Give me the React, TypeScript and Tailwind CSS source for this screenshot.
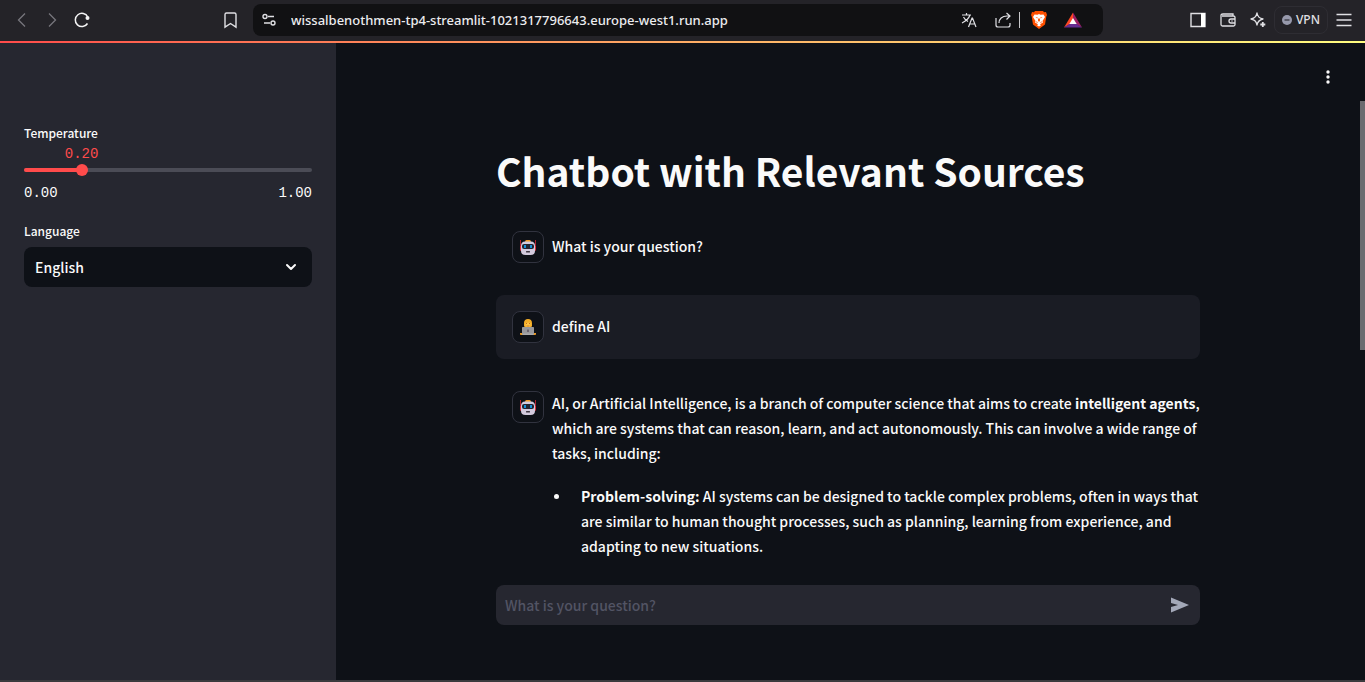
import { useState } from "react";

function RobotAvatar() {
  return (
    <div className="flex size-8 shrink-0 items-center justify-center rounded-lg border border-[#31333f] bg-[#0e1117]">
      <svg className="size-4" viewBox="0 0 16 16" role="img" aria-label="assistant">
        <path d="M0 1h1v6H0zM15 1h1v6h-1z" fill="#b3202c" />
        <path d="M0 7h2v5H1.500Q0 12 0 10.500zM16 7h-2v5h.5q1.500 0 1.500-1.500z" fill="#e0303a" />
        <path d="M6.500 1h3Q11 1 11 3H5q0-2 1.500-2z" fill="#f59a23" />
        <path d="M5 2.500h6q4 0 4 4.500v5q0 4-4.500 4h-5Q1 16 1 12V7q0-4.500 4-4.500z" fill="#d3cadd" />
        <rect x="2" y="5" width="12" height="5" rx="2" fill="#242430" />
        <path d="M4 6h2v3H4zM10 6h2v3h-2z" fill="#168dd4" />
        <rect x="6" y="12" width="4" height="1.500" rx=".5" fill="#3c3541" />
      </svg>
    </div>
  );
}

function UserAvatar() {
  return (
    <div className="flex size-8 shrink-0 items-center justify-center rounded-lg border border-[#31333f] bg-[#0e1117]">
      <svg className="size-4" viewBox="0 0 32 32" role="img" aria-label="user">
        <path d="M8 8c0-5 3-8 8-8s8 3 8 8v5c0 3-3 6-8 6s-8-3-8-6z" fill="#f4ad27" />
        <path d="M11 8c3-1 8-1 10 0v4c0 3-2 5-5 5s-5-2-5-5z" fill="#ffc545" />
        <path d="M12 8h2v2h-2zM18 8h2v2h-2z" fill="#c56c24" />
        <path d="M13 13h6v2h-6z" fill="#d98020" />
        <path d="M0 28h32v2c0 1-1 2-2 2H2c-1 0-2-1-2-2z" fill="#e99a25" />
        <path d="M6 16h20c1.500 0 2 1 2 2v13H4V18c0-1 .5-2 2-2z" fill="#98989b" />
        <rect x="14" y="21" width="4" height="5" rx="1" fill="#6c6470" />
        <path d="M5 29h22v3H5z" fill="#aaaaac" />
      </svg>
    </div>
  );
}

function BrowserBar() {
  return (
    <header className="flex h-[41px] shrink-0 items-center bg-[#242328] pr-[13px] text-[#e0e0e4]">
      <nav className="flex w-[253px] shrink-0 items-center pb-px pl-3" aria-label="Browser">
        <button className="flex size-5 items-center justify-center text-[#77767d]" aria-label="Back">
          <svg className="size-5" viewBox="0 0 20 20" fill="none" stroke="currentColor" strokeWidth="1.300"><path d="M13 3.500 6.500 10l6.500 6.500" /></svg>
        </button>
        <button className="ml-2.5 flex size-5 items-center justify-center text-[#77767d]" aria-label="Forward">
          <svg className="size-5" viewBox="0 0 20 20" fill="none" stroke="currentColor" strokeWidth="1.300"><path d="m7 3.500 6.500 6.500L7 16.500" /></svg>
        </button>
        <button className="ml-2.5 flex size-5 items-center justify-center text-[#f4f4f5]" aria-label="Reload">
          <svg className="size-5" viewBox="0 0 20 20" fill="none" stroke="currentColor" strokeWidth="1.500"><path d="M15.500 13.500A6.600 6.600 0 1 1 15.800 7" /><circle cx="15.500" cy="8" r="2" fill="currentColor" stroke="none" /></svg>
        </button>
        <button className="ml-auto mr-[13px] flex size-5 items-center justify-center" aria-label="Bookmark">
          <svg className="size-5" viewBox="0 0 20 20" fill="none" stroke="currentColor" strokeWidth="1.400"><path d="M5 4.500c0-1 .5-1.500 1.500-1.500h8c1 0 1.500.5 1.500 1.500v12.600L10.500 13.500 5 17.100z" /></svg>
        </button>
      </nav>
      <div className="mb-px flex h-8 w-[850px] shrink items-center rounded-lg bg-[#111113] pl-2 pr-[21px]">
        <svg className="size-4 shrink-0" viewBox="0 0 16 16" fill="none" stroke="currentColor" strokeWidth="1.400"><circle cx="4" cy="4.500" r="2" /><path d="M7 4.500h6M3 11h6" /><circle cx="12" cy="11" r="2" /></svg>
        <span className="ml-3.5 truncate font-['Noto_Sans',sans-serif] text-[13px] text-[#ececef]">wissalbenothmen-tp4-streamlit-1021317796643.europe-west1.run.app</span>
        <div className="ml-auto flex shrink-0 items-center">
          <button aria-label="Translate">
            <svg className="size-4" viewBox="0 0 16 16" fill="none" stroke="currentColor" strokeWidth="1.200"><path d="M1 3h9M5.500 1v2M9 3c-1 3-4 6-8 8M2.500 5c1 2 2.500 3.500 4.500 4.500M7.500 15l3.500-9h.500l3.500 9M8.700 12h5.100" /></svg>
          </button>
          <button className="ml-[18px]" aria-label="Share">
            <svg className="size-4" viewBox="0 0 16 16" fill="none" stroke="currentColor" strokeWidth="1.200"><path d="M1 6v7c0 1.300.7 2 2 2h10c1.300 0 2-.7 2-2v-2M4 11c0-4 3-7 8-7h3M11.500 1 15 4l-3.500 3.500" /></svg>
          </button>
          <span className="ml-2 h-4 w-px bg-[#c7c7ca]" />
          <button className="ml-2.5" aria-label="Brave Shields">
            <svg className="h-[18px] w-[18px]" viewBox="0 0 18 18"><path d="m5 0-1 1.200-2-.1L1 4l.7 1.400L3 13.500 9 18l6-4.500 1.300-8.100L17 4l-1-2.900-2 .1L13 0z" fill="#ff5000" /><path d="m4.500 3.500 3 .2L9 3l1.500.7 3-.2L15 6l-2.500 4 .5 1.500-3 1.700 1 1L9 15.500l-2-1.300 1-1-3-1.700.5-1.500L3 6z" fill="#fff" /><path d="m5.500 6 2.200.5-.4 1zM12.500 6l-2.200.5.4 1zM8.200 7.500h1.600l.2 2L9 11l-1-1.500zM6.500 10l1.500 2-1.600-.6zM11.500 10 10 12l1.600-.6z" fill="#ff5000" /></svg>
          </button>
          <button className="ml-4" aria-label="Rewards">
            <svg className="h-[18px] w-[18px]" viewBox="0 0 18 18"><path d="M9 1.500 0 16.500l9-5z" fill="#ff4724" /><path d="m9 1.500 9 15-9-5z" fill="#9e1f63" /><path d="m0 16.500 9-6 9 6z" fill="#662d91" /><path d="m9 7 3.700 6H5.300z" fill="#fff" /></svg>
          </button>
        </div>
      </div>
      <div className="mb-px ml-auto flex shrink-0 items-center">
        <button aria-label="Side panel">
          <svg className="size-4" viewBox="0 0 16 16"><path d="M1 1.500h14v13H1z" fill="none" stroke="currentColor" strokeWidth="1.400" /><path d="M11 1h4v14h-4z" fill="#fff" /></svg>
        </button>
        <button className="ml-3.5" aria-label="Wallet">
          <svg className="size-4" viewBox="0 0 16 16" fill="none" stroke="currentColor" strokeWidth="1.300"><path d="M13 4V2H3C1.500 2 1 2.500 1 3.500v9c0 1 .6 1.500 1.500 1.500h11c1 0 1.500-.5 1.500-1.500v-7c0-1-.5-1.500-1.500-1.500H2M15 7h-4c-1.300 0-2 .7-2 2s.7 2 2 2h4M11.500 9h1" /></svg>
        </button>
        <button className="ml-3.5" aria-label="Leo AI">
          <svg className="size-4" viewBox="0 0 16 16" fill="none" stroke="currentColor" strokeWidth="1.300" strokeLinejoin="round"><path d="M7 1c.6 3.800 2 5.300 6 6-4 1-5.400 2.300-6 6-.8-3.800-2-5-6-6 4-.9 5.200-2.300 6-6z" /><path d="M12.800 10v5M10.300 12.500h5" strokeWidth="1.800" /></svg>
        </button>
        <button className="ml-2 flex h-7 w-[54px] items-center justify-center gap-1 rounded-lg border border-[#2e2d33] font-['Noto_Sans',sans-serif] text-xs" aria-label="VPN">
          <svg className="size-2.5" viewBox="0 0 10 10"><circle cx="5" cy="5" r="5" fill="#9799ac" /><path d="M2.500 5h5" stroke="#303038" strokeWidth="1.200" /></svg>
          VPN
        </button>
        <button className="ml-2" aria-label="Menu">
          <svg className="size-4" viewBox="0 0 16 16" stroke="currentColor" strokeWidth="1.400"><path d="M.5 2.500h15M.5 8h15M.5 13.500h15" /></svg>
        </button>
      </div>
    </header>
  );
}

function Sidebar() {
  const [temperature, setTemperature] = useState(0.2);
  return (
    <aside className="w-[336px] shrink-0 bg-[#262730] px-6 pt-20">
      <label htmlFor="temperature" className="block text-[12px] leading-5">Temperature</label>
      <div className="mt-px h-5 font-['Liberation_Mono',monospace] text-sm leading-5 text-[#ff4b4b]">
        <output htmlFor="temperature" className="inline-block -translate-x-1/2" style={{ marginLeft: `${temperature * 100}%` }}>{temperature.toFixed(2)}</output>
      </div>
      <div className="grid h-3 items-center">
        <div className="col-start-1 row-start-1 h-1 overflow-hidden rounded-full bg-[#4b4c56]">
          <div className="h-full bg-[#ff4b4b]" style={{ width: `${temperature * 100}%` }} />
        </div>
        <input
          id="temperature"
          type="range"
          min="0"
          max="1"
          step="0.01"
          value={temperature}
          onChange={(event) => setTemperature(Number(event.target.value))}
          className="z-10 col-start-1 row-start-1 -mx-1.5 h-3 cursor-pointer appearance-none bg-transparent [&::-webkit-slider-thumb]:size-3 [&::-webkit-slider-thumb]:appearance-none [&::-webkit-slider-thumb]:rounded-full [&::-webkit-slider-thumb]:bg-[#ff4b4b]"
        />
      </div>
      <div className="mt-[7px] flex justify-between font-['Liberation_Mono',monospace] text-sm leading-5">
        <span>0.00</span>
        <span>1.00</span>
      </div>
      <label htmlFor="language" className="mt-[18px] block text-[12px] leading-5">Language</label>
      <div className="mt-1.5 grid items-center">
        <select id="language" defaultValue="English" className="col-start-1 row-start-1 h-10 w-full appearance-none rounded-lg bg-[#0e1117] pl-[11px] text-sm font-medium">
          <option>English</option>
          <option>French</option>
          <option>Arabic</option>
        </select>
        <svg className="pointer-events-none z-10 col-start-1 row-start-1 mr-[15px] h-3 w-3 justify-self-end" viewBox="0 0 12 12" fill="none" stroke="currentColor" strokeWidth="2" strokeLinecap="round" strokeLinejoin="round"><path d="m2 4 4 4 4-4" /></svg>
      </div>
    </aside>
  );
}

function Chat() {
  return (
    <main className="flex min-w-0 flex-1 flex-col">
      <div className="flex h-[58px] shrink-0 items-end justify-end pb-4 pr-[29px]">
        <button className="flex size-4 items-center justify-center" aria-label="Main menu">
          <svg className="size-4" viewBox="0 0 16 16" fill="currentColor"><circle cx="8" cy="3" r="1.700" /><circle cx="8" cy="8" r="1.700" /><circle cx="8" cy="13" r="1.700" /></svg>
        </button>
      </div>
      <div className="flex min-h-0 flex-1">
        <div className="flex min-w-0 flex-1 flex-col items-center px-4">
          <div className="w-full max-w-[704px] min-h-0 flex-1 overflow-hidden pt-11">
            <h1 className="text-[39px] font-bold leading-[50px]">Chatbot with Relevant Sources</h1>
            <div className="mt-5 flex flex-col gap-4">
              <article className="flex gap-2 p-4">
                <RobotAvatar />
                <p className="leading-[30px]">What is your question?</p>
              </article>
              <article className="flex gap-2 rounded-lg bg-[#1a1c24] p-4">
                <UserAvatar />
                <p className="leading-[30px]">define AI</p>
              </article>
              <article className="flex gap-2 py-4 pl-4">
                <RobotAvatar />
                <div className="min-w-0 flex-1 leading-[25px]">
                  <p>AI, or Artificial Intelligence, is a branch of computer science that aims to create <strong>intelligent agents</strong>, which are systems that can reason, learn, and act autonomously. This can involve a wide range of tasks, including:</p>
                  <ul className="mt-[18px]">
                    <li className="flex before:ml-0.5 before:mr-[22px] before:mt-2.5 before:size-[5px] before:shrink-0 before:rounded-full before:bg-[#fafafa]">
                      <p><strong>Problem-solving:</strong> AI systems can be designed to tackle complex problems, often in ways that are similar to human thought processes, such as planning, learning from experience, and adapting to new situations.</p>
                    </li>
                  </ul>
                </div>
              </article>
            </div>
          </div>
          <form className="mb-[55px] flex h-10 w-full max-w-[704px] shrink-0 items-center rounded-lg bg-[#262730] pl-[9px] pr-[11px]" onSubmit={(event) => event.preventDefault()}>
            <input type="text" aria-label="What is your question?" placeholder="What is your question?" className="h-10 min-w-0 flex-1 bg-transparent outline-none placeholder:text-[#525464]" />
            <button className="text-[#a3a8b8]" aria-label="Send">
              <svg className="h-5 w-[18px]" viewBox="0 0 18 20" fill="currentColor"><path d="M0 2.500 18 10 0 17.500V12l7-2-7-2z" /></svg>
            </button>
          </form>
        </div>
        <div className="w-[5px] shrink-0">
          <div className="h-[43%] bg-[#6b6b70]" />
        </div>
      </div>
    </main>
  );
}

export default function App() {
  return (
    <div className="flex h-screen flex-col overflow-hidden border-b-2 border-[#3a3a3d] bg-[#0e1117] font-['Noto_Sans_CJK_SC',sans-serif] text-sm font-medium text-[#fafafa]">
      <BrowserBar />
      <div className="h-0.5 shrink-0 bg-linear-to-r from-[#ff4b4b] to-[#fffd80]" />
      <div className="flex min-h-0 flex-1">
        <Sidebar />
        <Chat />
      </div>
    </div>
  );
}
